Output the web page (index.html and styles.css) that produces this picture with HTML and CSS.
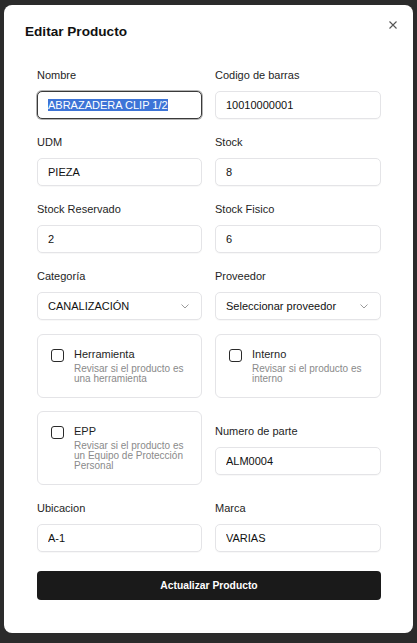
FILE: index.html
```html
<!DOCTYPE html>
<html lang="es">
<head>
<meta charset="utf-8">
<title>Editar Producto</title>
<link rel="stylesheet" href="styles.css">
</head>
<body>
<div class="backdrop">
  <div class="modal" role="dialog">
    <div class="modal-header">
      <h2 class="title">Editar Producto</h2>
      <button class="close" aria-label="Cerrar">
        <svg width="8" height="8" viewBox="0 0 8 8"><path d="M0.5 0.5 L7.5 7.5 M7.5 0.5 L0.5 7.5" stroke="#555" stroke-width="1.1" fill="none"/></svg>
      </button>
    </div>
    <form class="form">
      <div class="row">
        <div class="field">
          <label class="label">Nombre</label>
          <div class="input focused"><span class="selected">ABRAZADERA CLIP 1/2</span></div>
        </div>
        <div class="field">
          <label class="label">Codigo de barras</label>
          <input class="input" value="10010000001">
        </div>
      </div>
      <div class="row">
        <div class="field">
          <label class="label">UDM</label>
          <input class="input" value="PIEZA">
        </div>
        <div class="field">
          <label class="label">Stock</label>
          <input class="input" value="8">
        </div>
      </div>
      <div class="row">
        <div class="field">
          <label class="label">Stock Reservado</label>
          <input class="input" value="2">
        </div>
        <div class="field">
          <label class="label">Stock Fisico</label>
          <input class="input" value="6">
        </div>
      </div>
      <div class="row">
        <div class="field">
          <label class="label">Categoría</label>
          <div class="input select"><span>CANALIZACIÓN</span>
            <svg class="chev" width="8" height="5" viewBox="0 0 8 5"><path d="M0.5 0.5 L4 4 L7.5 0.5" stroke="#9a9a9a" stroke-width="1" fill="none"/></svg>
          </div>
        </div>
        <div class="field">
          <label class="label">Proveedor</label>
          <div class="input select"><span>Seleccionar proveedor</span>
            <svg class="chev" width="8" height="5" viewBox="0 0 8 5"><path d="M0.5 0.5 L4 4 L7.5 0.5" stroke="#9a9a9a" stroke-width="1" fill="none"/></svg>
          </div>
        </div>
      </div>
      <div class="row row-cards">
        <div class="card">
          <span class="checkbox"></span>
          <div class="card-text">
            <div class="card-title">Herramienta</div>
            <div class="card-desc">Revisar si el producto es una herramienta</div>
          </div>
        </div>
        <div class="card">
          <span class="checkbox"></span>
          <div class="card-text">
            <div class="card-title">Interno</div>
            <div class="card-desc">Revisar si el producto es interno</div>
          </div>
        </div>
      </div>
      <div class="row row-cards2">
        <div class="card">
          <span class="checkbox"></span>
          <div class="card-text">
            <div class="card-title">EPP</div>
            <div class="card-desc">Revisar si el producto es un Equipo de Protección Personal</div>
          </div>
        </div>
        <div class="field field-end">
          <label class="label">Numero de parte</label>
          <input class="input" value="ALM0004">
        </div>
      </div>
      <div class="row">
        <div class="field">
          <label class="label">Ubicacion</label>
          <input class="input" value="A-1">
        </div>
        <div class="field">
          <label class="label">Marca</label>
          <input class="input" value="VARIAS">
        </div>
      </div>
      <button type="button" class="submit">Actualizar Producto</button>
    </form>
  </div>
</div>
</body>
</html>
```
FILE: styles.css
```css
* { box-sizing: border-box; }
html, body { margin: 0; padding: 0; }
body {
  background: #2b2b2b;
  font-family: "Liberation Sans", Arial, sans-serif;
  width: 417px;
  height: 643px;
  overflow: hidden;
}
.backdrop {
  padding: 5px 4px;
}
.modal {
  position: relative;
  width: 409px;
  height: 628px;
  background: #fff;
  border-radius: 8px;
}
.modal-header {
  padding: 17px 21px 0;
}
.title {
  margin: 0;
  font-size: 13.6px;
  line-height: 20px;
  font-weight: bold;
  color: #111;
}
.close {
  position: absolute;
  top: 16px;
  right: 16px;
  width: 8px;
  height: 8px;
  padding: 0;
  border: 0;
  background: none;
  display: flex;
}
.form {
  display: flex;
  flex-direction: column;
  gap: 16px;
  margin: 26px 32px 0 33px;
}
.row {
  display: grid;
  grid-template-columns: 165px 166px;
  column-gap: 13px;
}
.row-cards { margin-top: -2px; }
.row-cards2 { margin-top: -3px; }
.field {
  display: flex;
  flex-direction: column;
}
.field-end {
  align-self: end;
  margin-bottom: 10px;
}
.label {
  font-size: 11px;
  line-height: 14px;
  color: #1e1e1e;
  margin-bottom: 9px;
}
.input {
  height: 28px;
  width: 100%;
  border: 1px solid #e4e4e7;
  border-radius: 5px;
  padding: 0 10px;
  font-family: "Liberation Sans", Arial, sans-serif;
  font-size: 11px;
  color: #111;
  background: #fff;
  box-shadow: 0 1px 1px rgba(0, 0, 0, 0.03);
  display: flex;
  align-items: center;
  outline: none;
}
.input.focused {
  border-color: #3a3a3a;
  box-shadow: 0 0 0 1px rgba(40, 40, 40, 0.35);
}
.selected {
  background: #3d74d7;
  color: #fff;
  line-height: 12px;
}
.select {
  justify-content: space-between;
  padding-right: 12px;
}
.chev { display: block; }
.card {
  display: flex;
  align-items: flex-start;
  gap: 10px;
  border: 1px solid #e4e4e7;
  border-radius: 6px;
  padding: 13px;
}
.checkbox {
  flex: none;
  width: 13px;
  height: 13px;
  border: 1.5px solid #2a2a2a;
  border-radius: 3px;
  margin-top: 1px;
}
.card-title {
  font-size: 11px;
  line-height: 13px;
  color: #1e1e1e;
  margin-bottom: 3px;
}
.card-desc {
  font-size: 10px;
  line-height: 10px;
  color: #8a8a8a;
}
.submit {
  margin-top: 3px;
  height: 29px;
  border: 0;
  border-radius: 4px;
  background: #1a1a1a;
  color: #fff;
  font-family: "Liberation Sans", Arial, sans-serif;
  font-weight: bold;
  font-size: 10.3px;
}
```
